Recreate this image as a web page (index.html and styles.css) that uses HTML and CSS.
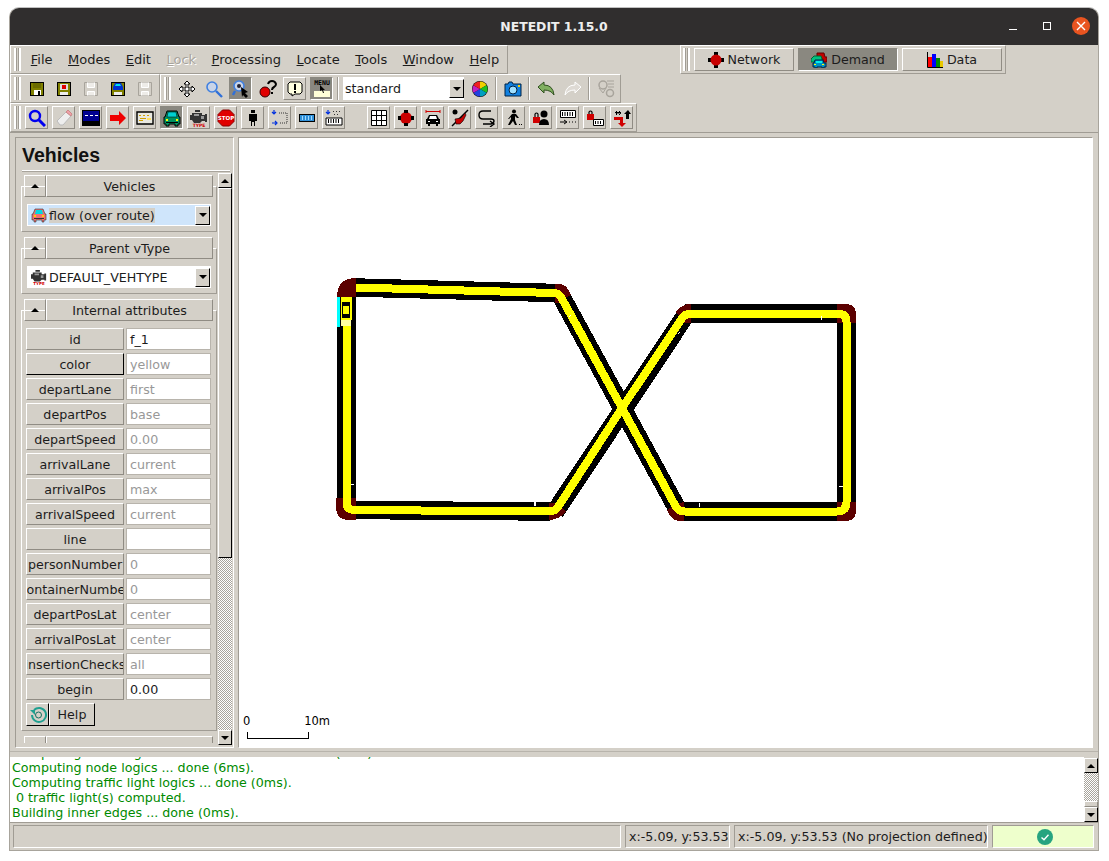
FILE: index.html
```html
<!DOCTYPE html>
<html>
<head>
    <title>NETEDIT 1.15.0</title>
    <link rel="stylesheet" href="styles.css">
</head>
<body>
    <!-- shared icons -->
    <svg class="defs" width="0" height="0">
        <symbol id="floppy" viewBox="0 0 16 16">
            <path d="M1 1h14v14H1z" fill="#000"/><path d="M2 2h12v12H2z" fill="#808000"/>
            <path d="M4 2h8v5H4z" fill="#6c6c00"/><path d="M5 9h7v5H5z" fill="#fff"/><path d="M9 10h2v4H9z" fill="#000"/>
        </symbol>
        <symbol id="floppy-off" viewBox="0 0 16 16">
            <path d="M1.5 1.5h13v13h-13z" fill="#d4d0c8" stroke="#a8a49c"/>
            <path d="M4.5 1.5v5h7v-5M4.5 14.5v-4h7v4" fill="#eeece8" stroke="#fff"/>
        </symbol>
        <symbol id="engine" viewBox="0 0 18 18">
            <path d="M5 1h5v2H5zM2 4h10v2h3v-1h2v8h-2v-1h-3l-2 2H4L2 11H0V6h2z" fill="#333"/>
            <path d="M4 5h5v2H4zM11 7h3v3h-3z" fill="#999"/>
            <text class="ico-type" x="9" y="17.5">TYPE</text>
        </symbol>
        <symbol id="sedan" viewBox="0 0 16 16">
            <path d="M4 2h8l2 5h1v6h-2v2h-2v-2H5v2H3v-2H1V7h1z" fill="currentColor" stroke="#333" stroke-width=".6"/>
            <path d="M5 3h6l1 4H4z" fill="#00d8e0"/>
            <path d="M3 8h2v2H3zM11 8h2v2h-2z" fill="#ffd000"/>
            <path d="M3 11h10v1H3z" fill="#333"/>
        </symbol>
    </svg>

    <div class="window">
        <div class="titlebar">
            <span class="title">NETEDIT 1.15.0</span>
            <div class="win-btns">
                <span class="win-min"></span>
                <span class="win-max"></span>
                <span class="win-close">
                    <svg width="10" height="10" viewBox="0 0 10 10"><path d="M1 1l8 8M9 1l-8 8" stroke="#fff" stroke-width="1.4"/></svg>
                </span>
            </div>
        </div>

        <div class="row">
            <div class="toolbar menubar">
                <span class="grip"></span>
                <a class="menu-item"><u>F</u>ile</a>
                <a class="menu-item"><u>M</u>odes</a>
                <a class="menu-item"><u>E</u>dit</a>
                <a class="menu-item disabled"><u>L</u>ock</a>
                <a class="menu-item"><u>P</u>rocessing</a>
                <a class="menu-item"><u>L</u>ocate</a>
                <a class="menu-item"><u>T</u>ools</a>
                <a class="menu-item"><u>W</u>indow</a>
                <a class="menu-item"><u>H</u>elp</a>
            </div>
            <div class="toolbar modes">
                <span class="grip"></span>
                <div class="mode-btn">
                    <svg width="16" height="16" viewBox="0 0 16 16"><path d="M6 0h4v16H6zM0 6h16v4H0z" fill="#000"/><circle cx="8" cy="8" r="5.5" fill="#c80000"/></svg>
                    Network
                </div>
                <div class="mode-btn active">
                    <svg width="16" height="16" viewBox="0 0 16 16">
                        <path d="M6 1h7l1 4h2v5h-4V7H6z" fill="#c00000" stroke="#600"/>
                        <path d="M1 6l2-2h7l1 3v3H0V7z" fill="#00c080" stroke="#063"/>
                        <path d="M4 8h8l1 3h2v4h-2v1h-2v-1H6v1H4v-1H2v-4h1z" fill="#0090c0" stroke="#024"/>
                        <path d="M5 9h6v2H5z" fill="#00f0f0"/><path d="M3 12h2v1H3zM11 12h2v1h-2z" fill="#ff0"/>
                    </svg>
                    Demand
                </div>
                <div class="mode-btn">
                    <svg width="16" height="16" viewBox="0 0 16 16"><path d="M1 5h4v10H1z" fill="#f00"/><path d="M5 2h4v13H5z" fill="#00f"/><path d="M9 6h4v9H9z" fill="#080"/><path d="M13 9h3v6h-3z" fill="#e8c800"/><path d="M.5 0v15.5H16" fill="none" stroke="#000"/></svg>
                    Data
                </div>
            </div>
        </div>

        <div class="row">
            <div class="toolbar">
                <span class="grip"></span>
                <span class="btn flat"><svg width="16" height="16"><use href="#floppy"/></svg></span>
                <span class="btn flat">
                    <svg width="16" height="16" viewBox="0 0 16 16"><path d="M1 1h14v14H1z" fill="#000"/><path d="M2 2h12v12H2z" fill="#808000"/><path d="M4 3h8v6H4z" fill="#ddd"/><path d="M6 4h4v4H6z" fill="#e00000"/><path d="M4 11h8v3H4z" fill="#eee"/></svg>
                </span>
                <span class="btn flat"><svg width="16" height="16"><use href="#floppy-off"/></svg></span>
                <span class="btn flat">
                    <svg width="16" height="16" viewBox="0 0 16 16"><path d="M1 1h14v14H1z" fill="#000"/><path d="M2 2h12v12H2z" fill="#808000"/><path d="M5 2h6l2 4v3H3V6z" fill="#0030d0"/><path d="M6 3h4l1 2H5z" fill="#00e0f0"/><path d="M4 11h8v3H4z" fill="#eee"/></svg>
                </span>
                <span class="btn flat"><svg width="16" height="16"><use href="#floppy-off"/></svg></span>
            </div>
            <div class="toolbar">
                <span class="grip"></span>
                <span class="btn flat">
                    <svg width="18" height="18" viewBox="0 0 18 18"><path d="M9 1l3 3h-2v4h4V6l3 3-3 3v-2h-4v4h2l-3 3-3-3h2v-4H4v2L1 9l3-3v2h4V4H6z" fill="#fff" stroke="#000"/></svg>
                </span>
                <span class="btn flat">
                    <svg width="18" height="18" viewBox="0 0 18 18"><circle cx="7" cy="7" r="5" fill="#c8d4e8" stroke="#4080e0" stroke-width="1.6"/><path d="M11 11l6 6" stroke="#3070d8" stroke-width="2.4"/></svg>
                </span>
                <span class="btn active">
                    <svg width="18" height="18" viewBox="0 0 18 18"><circle cx="7" cy="6" r="5" fill="#c8d4e8" stroke="#4080e0" stroke-width="1.6"/><circle cx="7" cy="6" r="2" fill="#223"/><path d="M3 11l-2 4" stroke="#3070d8" stroke-width="2.4"/><path d="M9 7l7 5-3 1 3 3-2 2-3-3-1 2z" fill="#000"/></svg>
                </span>
                <span class="btn flat">
                    <svg width="18" height="18" viewBox="0 0 18 18"><circle cx="6" cy="12" r="5" fill="#e00000" stroke="#300"/><path d="M9 4q1-3 4-3t4 3q0 2-2 3t-2 3" fill="none" stroke="#000" stroke-width="2"/><path d="M12 12h2v2h-2z" fill="#000"/></svg>
                </span>
                <span class="btn raised">
                    <svg width="16" height="16" viewBox="0 0 16 16"><path d="M3 1h10l2 2v8l-2 2H8l-3 2v-2H3l-2-2V3z" fill="#ffffe0" stroke="#000"/><path d="M7 3h2v6H7zM7 10h2v2H7z" fill="#000"/></svg>
                </span>
                <span class="btn active">
                    <svg width="20" height="20" viewBox="0 0 20 20"><text class="ico-menu" x="10" y="6">MENU</text><path d="M2 12h16v6H2z" fill="#ffffd8"/><path d="M8 6l5 5-2 0 1 3-1 0-1-3-2 1z" fill="#000"/></svg>
                </span>
                <span class="sep"></span>
                <div class="scheme">
                    <span class="scheme-text">standard</span>
                    <span class="drop"><span class="arrow-down"></span></span>
                </div>
                <span class="btn flat">
                    <svg width="18" height="18" viewBox="0 0 18 18">
                        <circle cx="9" cy="9" r="8" fill="#000"/>
                        <path d="M9 9V1.5A7.5 7.5 0 0 1 15.5 5.2z" fill="#f0d000"/><path d="M9 9l6.5-3.8a7.5 7.5 0 0 1 0 7.6z" fill="#20c020"/>
                        <path d="M9 9l6.5 3.8A7.5 7.5 0 0 1 9 16.5z" fill="#00a0c0"/><path d="M9 9v7.5a7.5 7.5 0 0 1-6.5-3.7z" fill="#2040e0"/>
                        <path d="M9 9l-6.5 3.8a7.5 7.5 0 0 1 0-7.6z" fill="#c020c0"/><path d="M9 9L2.5 5.2A7.5 7.5 0 0 1 9 1.5z" fill="#f02020"/>
                    </svg>
                </span>
                <span class="sep"></span>
                <span class="btn flat">
                    <svg width="18" height="18" viewBox="0 0 18 18"><path d="M1 4h3l1-2h3l1 2h8v12H1z" fill="#1080e0" stroke="#024"/><circle cx="9" cy="10" r="4" fill="#a0e0ff" stroke="#024"/><path d="M14 5h2v2h-2z" fill="#ffd000"/></svg>
                </span>
                <span class="sep"></span>
                <span class="btn flat">
                    <svg width="18" height="18" viewBox="0 0 18 18"><path d="M1 7l6-5v3q9 0 10 10-3-5-10-5v3z" fill="#80b060" stroke="#305020"/></svg>
                </span>
                <span class="btn flat">
                    <svg width="18" height="18" viewBox="0 0 18 18"><path d="M17 7l-6-5v3Q2 5 1 15q3-5 10-5v3z" fill="#dedad4" stroke="#fff"/></svg>
                </span>
                <span class="sep"></span>
                <span class="btn flat">
                    <svg width="18" height="18" viewBox="0 0 18 18"><circle cx="6" cy="5" r="4" fill="none" stroke="#a8a49c" stroke-width="1.5"/><path d="M2 8l4 5 3-5" fill="none" stroke="#a8a49c"/><path d="M10 1h7M11 4h6M11 7h6" stroke="#a8a49c"/><circle cx="13" cy="13" r="3.5" fill="none" stroke="#a8a49c" stroke-width="1.5"/></svg>
                </span>
            </div>
        </div>

        <div class="row">
            <div class="toolbar">
                <span class="grip"></span>
                <span class="btn raised">
                    <svg width="18" height="18" viewBox="0 0 18 18"><circle cx="7" cy="7" r="5" fill="none" stroke="#0000f0" stroke-width="2.4"/><path d="M11 11l6 6" stroke="#0000f0" stroke-width="3"/></svg>
                </span>
                <span class="btn raised">
                    <svg width="18" height="18" viewBox="0 0 18 18"><path d="M2 12l9-9 5 4-8 9H5z" fill="#eee" stroke="#bbb"/><path d="M11 3l2-2 4 4-1 2z" fill="#f0a0a8" stroke="#c88"/></svg>
                </span>
                <span class="btn raised">
                    <svg width="18" height="18" viewBox="0 0 18 18"><path d="M0 1h18v16H0z" fill="#000"/><path d="M1 2h16v10H1z" fill="#000090"/><path d="M3 6h3v1H3zM8 6h3v1H8zM13 6h3v1h-3z" fill="#fff"/></svg>
                </span>
                <span class="btn raised">
                    <svg width="18" height="18" viewBox="0 0 18 18"><path d="M1 6h9V2l7 7-7 7v-4H1z" fill="#f00000"/></svg>
                </span>
                <span class="btn raised">
                    <svg width="18" height="18" viewBox="0 0 18 18"><path d="M1 3h16v12H1z" fill="#e8e8e0" stroke="#000" stroke-width="1.4"/><path d="M3 6h2v1H3zM7 6h2v1H7zM11 6h2v1h-2zM4 9h6v1H4zM3 11h4v1H3z" fill="#d0a000"/><path d="M11 9h4v2h-4z" fill="#ffe060"/></svg>
                </span>
                <span class="btn active">
                    <svg width="18" height="18" viewBox="0 0 18 18"><path d="M4 2h10l2 6h1v7h-2v2h-3v-2H6v2H3v-2H1V8h1z" fill="#009060" stroke="#000"/><path d="M5 3h8l1 5H4z" fill="#00d0d0" stroke="#000" stroke-width=".5"/><path d="M3 10h2v2H3zM13 10h2v2h-2z" fill="#ff0"/><path d="M3 13h12v1H3z" fill="#000"/></svg>
                </span>
                <span class="btn raised"><svg width="18" height="18"><use href="#engine"/></svg></span>
                <span class="btn raised">
                    <svg width="18" height="18" viewBox="0 0 18 18"><path d="M5.5 1h7L17 5.500v7L12.500 17h-7L1 12.500v-7z" fill="#e00000" stroke="#800"/><text class="ico-stop" x="9" y="11">STOP</text></svg>
                </span>
                <span class="btn raised">
                    <svg width="18" height="18" viewBox="0 0 18 18"><path d="M7 1h4v3H7zM5 5h8v7h-2v5H10v-4H8v4H7v-5H5z" fill="#000"/></svg>
                </span>
                <span class="btn raised">
                    <svg width="18" height="18" viewBox="0 0 18 18"><path d="M3 1v3M1 3l2 2 2-2M1 14h4M4 12l2 2-2 2" fill="none" stroke="#0030e0" stroke-width="1.2"/><path d="M8 4h8v10H8" fill="none" stroke="#333" stroke-dasharray="1 1"/></svg>
                </span>
                <span class="btn raised">
                    <svg width="18" height="18" viewBox="0 0 18 18"><path d="M1 5h16v8H1z" fill="#000"/><path d="M2 6h14v6H2z" fill="#3090d8"/><path d="M4 7h1v4H4zM7 7h1v4H7zM10 7h1v4h-1zM13 7h1v4h-1z" fill="#a0d8ff"/></svg>
                </span>
                <span class="btn raised">
                    <svg width="18" height="18" viewBox="0 0 18 18"><path d="M3 1v3M1 3l2 2 2-2" fill="none" stroke="#0030e0" stroke-width="1.2"/><path d="M8 2h1v1H8zM11 2h1v1h-1zM14 2h1v1h-1zM9 5h1v1H9zM12 5h1v1h-1z" fill="#333"/><path d="M1 9h16v7H1z" fill="#fff" stroke="#000"/><path d="M3 10h1v4H3zM5.500 10h1v4h-1zM8 10h1v4H8zM10.500 10h1v4h-1zM13 10h1v4h-1z" fill="#000"/></svg>
                </span>
                <span class="btn-gap"></span>
                <span class="btn raised">
                    <svg width="18" height="18" viewBox="0 0 18 18"><path d="M1.500 1.500h15v15h-15zM6.500 1.500v15M11.500 1.500v15M1.500 6.500h15M1.500 11.500h15" fill="#fff" stroke="#000"/></svg>
                </span>
                <span class="btn raised">
                    <svg width="18" height="18" viewBox="0 0 18 18"><path d="M7 1h4v16H7zM1 7h16v4H1z" fill="#000"/><circle cx="9" cy="9" r="6" fill="#c80000"/><path d="M7 1h4v3H7zM7 14h4v3H7zM1 7h3v4H1zM14 7h3v4h-3z" fill="#000"/></svg>
                </span>
                <span class="btn raised">
                    <svg width="18" height="18" viewBox="0 0 18 18"><path d="M2 2.500h14M2 1v3M16 1v3" stroke="#d00000"/><path d="M5 6h8l2 4h1v5h-2v2h-2v-2H6v2H4v-2H2v-5h1z" fill="#000"/><path d="M6 7h6l1 3H5z" fill="#fff"/><path d="M4 12h2v1H4zM12 12h2v1h-2z" fill="#fff"/></svg>
                </span>
                <span class="btn raised">
                    <svg width="18" height="18" viewBox="0 0 18 18"><circle cx="4" cy="3" r="2.500" fill="#000"/><path d="M17 1L1 17" stroke="#000" stroke-width="1.4"/><path d="M4 10l6-1 4-5 1 2-3 6-3 3H5z" fill="#c80000" stroke="#000" stroke-width=".6"/></svg>
                </span>
                <span class="btn raised">
                    <svg width="18" height="18" viewBox="0 0 18 18"><path d="M13 2H5Q1 2 1 6t4 4h8q3 0 3 2t-3 3H5" fill="none" stroke="#000" stroke-width="1.400"/><path d="M12 12l4 3-4 3" fill="none" stroke="#000" stroke-width="1.400"/></svg>
                </span>
                <span class="btn raised">
                    <svg width="18" height="18" viewBox="0 0 18 18"><circle cx="9" cy="2.500" r="2" fill="#000"/><path d="M7 5h4l3 4h-2l-2-2v4l2 5h-2l-2-4-3 4H3l3-6V8L4 10H3z" fill="#000"/><path d="M14 15h1v1h-1zM16 15h1v1h-1z" fill="#000"/></svg>
                </span>
                <span class="btn raised">
                    <svg width="18" height="18" viewBox="0 0 18 18"><path d="M1 8h7v6H1z" fill="#d00000"/><path d="M3 8V5q1.500-2 3 0v3" fill="none" stroke="#000" stroke-width="1.200"/><circle cx="12" cy="5" r="3.500" fill="#000"/><path d="M7 16q0-6 5-6t5 6z" fill="#000"/></svg>
                </span>
                <span class="btn raised">
                    <svg width="18" height="18" viewBox="0 0 18 18"><path d="M1.500 1.500h15v7h-15z" fill="#fff" stroke="#000"/><path d="M3 3h1v4H3zM5.500 3h1v4h-1zM8 3h1v4H8zM10.500 3h1v4h-1zM13 3h1v4h-1z" fill="#000"/><path d="M1 13h6M5 11l3 2-3 2" fill="none" stroke="#000"/><path d="M10 13h1M13 13h1M16 13h1" stroke="#000"/></svg>
                </span>
                <span class="btn raised">
                    <svg width="18" height="18" viewBox="0 0 18 18"><path d="M1 5h7v6H1z" fill="#d00000"/><path d="M3 5V3q1.500-2 3 0v2" fill="none" stroke="#000" stroke-width="1.200"/><path d="M7.500 10.500h10v6h-10z" fill="#fff" stroke="#000"/><path d="M9 12h1v3H9zM11.500 12h1v3h-1zM14 12h1v3h-1z" fill="#000"/></svg>
                </span>
                <span class="btn raised">
                    <svg width="18" height="18" viewBox="0 0 18 18"><path d="M1 8h9v3H1z" fill="#d00000"/><path d="M7 10h3v4h3l-4 4-4-4h2z" fill="#d00000"/><path d="M13 10V5h-2l4-4 3 4h-2v5z" fill="#000"/><path d="M3 2h1v4H3zM6 2h1v4H6zM2 3h6v1H2zM2 5h6v-1" fill="#000"/></svg>
                </span>
            </div>
        </div>

        <div class="main">
            <div class="side">
                <h1 class="side-title">Vehicles</h1>
                <div class="side-body">
                    <div class="side-scroll">
                        <div class="group">
                            <div class="group-head">
                                <span class="collapse"><span class="arrow-up"></span></span>
                                <span class="group-name">Vehicles</span>
                            </div>
                            <div class="group-frame">
                                <div class="combo selected">
                                    <svg class="combo-ico" width="16" height="16" color="#f07070"><use href="#sedan"/></svg>
                                    <span class="combo-sel">flow (over route)</span>
                                    <span class="drop"><span class="arrow-down"></span></span>
                                </div>
                            </div>
                        </div>
                        <div class="group">
                            <div class="group-head">
                                <span class="collapse"><span class="arrow-up"></span></span>
                                <span class="group-name">Parent vType</span>
                            </div>
                            <div class="group-frame">
                                <div class="combo">
                                    <svg class="combo-ico" width="16" height="16"><use href="#engine"/></svg>
                                    <span class="combo-sel">DEFAULT_VEHTYPE</span>
                                    <span class="drop"><span class="arrow-down"></span></span>
                                </div>
                            </div>
                        </div>
                        <div class="group">
                            <div class="group-head">
                                <span class="collapse"><span class="arrow-up"></span></span>
                                <span class="group-name">Internal attributes</span>
                            </div>
                            <div class="group-frame attrs">
                                <div class="attr"><span class="attr-name">id</span><span class="attr-value">f_1</span></div>
                                <div class="attr"><span class="attr-name push">color</span><span class="attr-value muted">yellow</span></div>
                                <div class="attr"><span class="attr-name">departLane</span><span class="attr-value muted">first</span></div>
                                <div class="attr"><span class="attr-name">departPos</span><span class="attr-value muted">base</span></div>
                                <div class="attr"><span class="attr-name">departSpeed</span><span class="attr-value muted">0.00</span></div>
                                <div class="attr"><span class="attr-name">arrivalLane</span><span class="attr-value muted">current</span></div>
                                <div class="attr"><span class="attr-name">arrivalPos</span><span class="attr-value muted">max</span></div>
                                <div class="attr"><span class="attr-name">arrivalSpeed</span><span class="attr-value muted">current</span></div>
                                <div class="attr"><span class="attr-name">line</span><span class="attr-value"></span></div>
                                <div class="attr"><span class="attr-name">personNumber</span><span class="attr-value muted">0</span></div>
                                <div class="attr"><span class="attr-name">containerNumber</span><span class="attr-value muted">0</span></div>
                                <div class="attr"><span class="attr-name">departPosLat</span><span class="attr-value muted">center</span></div>
                                <div class="attr"><span class="attr-name">arrivalPosLat</span><span class="attr-value muted">center</span></div>
                                <div class="attr"><span class="attr-name">insertionChecks</span><span class="attr-value muted">all</span></div>
                                <div class="attr"><span class="attr-name">begin</span><span class="attr-value">0.00</span></div>
                                <div class="help-row">
                                    <span class="help-ico">
                                        <svg width="18" height="18" viewBox="0 0 18 18"><path d="M5 4a7 7 0 1 1-2 5" fill="none" stroke="#20a090" stroke-width="2"/><path d="M1 4h5v5z" fill="#20a090"/><circle cx="9.500" cy="9" r="3" fill="none" stroke="#107060"/></svg>
                                    </span>
                                    <span class="help-btn">Help</span>
                                </div>
                            </div>
                        </div>
                        <div class="group">
                            <div class="group-head">
                                <span class="collapse"><span class="arrow-up"></span></span>
                                <span class="group-name">Flow attributes</span>
                            </div>
                        </div>
                    </div>
                    <div class="vscroll">
                        <span class="scroll-btn"><span class="arrow-up"></span></span>
                        <span class="scroll-thumb"></span>
                        <span class="scroll-track"></span>
                        <span class="scroll-btn"><span class="arrow-down"></span></span>
                    </div>
                </div>
            </div>

            <div class="canvas">
                <svg class="net" width="853" height="609" viewBox="240 138 853 609">
                    <!-- road edges -->
                    <g class="road-edge">
                        <path d="M347.500 297V500"/>
                        <path d="M357 287.500L556 293"/>
                        <path d="M357 510L551 511.500"/>
                        <path d="M562 296L680 512"/>
                        <path d="M556 512L688 313"/>
                        <path d="M686 313.500H838"/>
                        <path d="M847.500 323V502"/>
                        <path d="M684 511.500H838"/>
                    </g>
                    <!-- junctions -->
                    <g class="junction">
                        <path d="M338 297Q338 278 357 278V297Z"/>
                        <path d="M556 284H562Q568 285 572 295L563 300L560 303H556Z"/>
                        <path d="M337 498H357V520H350Q338 520 337 508Z"/>
                        <path d="M550 503H556L567 511Q560 520 550 520Z"/>
                        <path d="M677 312Q682 304 692 304V323H685Z"/>
                        <path d="M838 304H846Q857 304 857 315V323H838Z"/>
                        <path d="M838 502H857V510Q857 521 846 521H838Z"/>
                        <path d="M684 502H685V521H680Q673 521 668 510L676 505Z"/>
                    </g>
                    <path class="road-lane" d="M347.500 297V504Q347.500 510 357 510L550 511.500Q556 511.500 559 507L623 408L684 317Q687 313.500 692 313.500H838Q847.500 313.500 847.500 322V502Q847.500 511.500 838 511.500H686Q680 511.500 677 507L623 408L562 297Q559 293 555 293L357 287.500"/>
                    <!-- small marks where the lanes meet -->
                    <path class="tick" d="M352 484h3M535 502v4M536 506v-4M822 316v4M840 486h4M700 503v4M681 332l-2 2M572 315l-2 2"/>
                    <!-- vehicle -->
                    <path d="M338 297h3v30h-3z" fill="#00ffff"/>
                    <path d="M342 297h11v23h-11z" fill="#ffff00"/>
                    <path d="M342 320h10v6h-10z" fill="#ffffa0"/>
                    <path d="M343 302h8v4h-8zM343 314h8v4h-8zM343 306h1v8h-1zM350 306h1v8h-1z" fill="#000"/>
                </svg>
                <div class="scale">
                    <div class="scale-labels"><span>0</span><span>10m</span></div>
                    <div class="scale-bar"></div>
                </div>
            </div>
        </div>

        <div class="log">
            <div class="log-text">
                <div>Computing traffic light control information ... done (0ms).</div>
                <div>Computing node logics ... done (6ms).</div>
                <div>Computing traffic light logics ... done (0ms).</div>
                <div>&nbsp;0 traffic light(s) computed.</div>
                <div>Building inner edges ... done (0ms).</div>
            </div>
            <div class="vscroll log-scroll">
                <span class="scroll-btn"><span class="arrow-up"></span></span>
                <span class="scroll-track"></span>
                <span class="scroll-thumb mini"></span>
                <span class="scroll-btn"><span class="arrow-down"></span></span>
            </div>
        </div>

        <div class="status">
            <span class="cell grow"></span>
            <span class="cell coord1">x:-5.09, y:53.53</span>
            <span class="cell coord2">x:-5.09, y:53.53 (No projection defined)</span>
            <span class="cell ok">
                <svg width="16" height="16" viewBox="0 0 16 16"><circle cx="8" cy="8" r="8" fill="#26a480"/><path d="M4.500 8.500l2.500 2.300 4.500-5" fill="none" stroke="#fff" stroke-width="1.400"/></svg>
            </span>
        </div>
    </div>
</body>
</html>
```

FILE: styles.css
```css
* {
    box-sizing: border-box;
}
body {
    margin: 0;
    background-color: #fff;
    font-family: "DejaVu Sans", sans-serif;
    font-size: 12.67px;
    color: #1c1c1c;
}
.defs {
    position: absolute;
}
.window {
    width: 1090px;
    height: 844px;
    margin: 7px 0 0 9px;
    background-color: #d4d0c8;
    border: 1px solid #a8a49c;
    border-top-color: #c0c0c0;
    border-radius: 10px 10px 0 0;
    display: flex;
    flex-direction: column;
    overflow: hidden;
}

/* title bar */
.titlebar {
    height: 37px;
    flex: none;
    background-color: #302e2e;
    color: #eeeeee;
    display: flex;
    align-items: center;
    justify-content: center;
    position: relative;
}
.title {
    font-size: 12.4px;
    font-weight: bold;
}
.win-btns {
    position: absolute;
    right: 8px;
    top: 9px;
    display: flex;
    align-items: center;
    height: 18px;
}
.win-min {
    width: 8px;
    height: 1px;
    margin-top: 6px;
    background-color: #fff;
    margin-right: 26px;
}
.win-max {
    width: 8px;
    height: 8px;
    border: 1px solid #fff;
    margin-right: 21px;
}
.win-close {
    width: 18px;
    height: 18px;
    border-radius: 50%;
    background-color: #e95420;
    display: flex;
    align-items: center;
    justify-content: center;
}

/* tool bars */
.row {
    height: 29px;
    flex: none;
    display: flex;
}
.toolbar {
    display: flex;
    align-items: center;
    gap: 4px;
    height: 29px;
    padding-left: 3px;
    padding-right: 3px;
    border: 1px solid;
    border-color: #fff #a09c94 #a09c94 #fff;
}
.grip {
    width: 7px;
    height: 23px;
    flex: none;
    border-left: 2px solid #fff;
    border-right: 2px solid #fff;
    box-shadow: inset 1px 0 0 #a09c94, inset -1px 0 0 #a09c94;
}
.menubar {
    width: 498px;
    gap: 0;
}
.menubar .grip {
    margin-right: 2px;
}
.menu-item {
    padding: 0 7.75px;
    font-size: 13px;
    white-space: nowrap;
}
.menu-item.disabled {
    color: #a8a49c;
    text-shadow: 1px 1px 0 #fff;
}
.modes {
    margin-left: 172px;
    width: 326px;
    padding-left: 2px;
}
.mode-btn {
    width: 100px;
    height: 23px;
    display: flex;
    align-items: center;
    justify-content: center;
    gap: 4px;
    border: 1px solid;
    border-color: #fff #908c84 #908c84 #fff;
}
.mode-btn.active {
    background-color: #8a8880;
    border-color: #8a8880 #fff #fff #8a8880;
}
.btn {
    width: 23px;
    height: 23px;
    flex: none;
    display: flex;
    align-items: center;
    justify-content: center;
    border: 1px solid transparent;
}
.btn.raised {
    border-color: #fff #908c84 #908c84 #fff;
}
.btn.active {
    background-color: #8a8880;
    border-color: #8a8880 #fff #fff #8a8880;
}
.btn-gap {
    width: 14px;
    flex: none;
}
.sep {
    width: 2px;
    height: 23px;
    flex: none;
    border-left: 1px solid #a09c94;
    border-right: 1px solid #fff;
}
.scheme {
    width: 121px;
    height: 23px;
    flex: none;
    background-color: #fff;
    display: flex;
    align-items: center;
    padding-left: 2px;
}
.scheme-text {
    flex: 1;
}
.drop {
    width: 15px;
    height: 19px;
    flex: none;
    background-color: #d4d0c8;
    border: 1px solid;
    border-color: #fff #000 #000 #fff;
    display: flex;
    align-items: center;
    justify-content: center;
}
.arrow-down,
.arrow-up {
    width: 0;
    height: 0;
    border-left: 4px solid transparent;
    border-right: 4px solid transparent;
}
.arrow-down {
    border-top: 4px solid #000;
}
.arrow-up {
    border-bottom: 4px solid #000;
}

/* main area */
.main {
    height: 620px;
    flex: none;
    display: flex;
    padding: 4px 4px 2px 5px;
    border-top: 1px solid #a09c94;
    border-bottom: 1px solid #b8b4ac;
}
.side {
    width: 219px;
    height: 611px;
    flex: none;
    display: flex;
    flex-direction: column;
    border: 1px solid;
    border-color: #a09c94 #fff #fff #a09c94;
    overflow: hidden;
}
.side-title {
    margin: 0 3px 0 6px;
    height: 33px;
    flex: none;
    font-family: "Liberation Sans", sans-serif;
    font-size: 19.5px;
    line-height: 35px;
    font-weight: bold;
    color: #111;
    border-bottom: 1px solid #fff;
    box-shadow: 0 1px 0 #a8a49c;
}
.side-body {
    flex: 1;
    min-height: 0;
    display: flex;
    padding: 2px 2px 2px 4px;
}
.side-scroll {
    width: 197px;
    flex: none;
    overflow: hidden;
    padding-top: 2px;
    margin-bottom: 2px;
    display: flex;
    flex-direction: column;
    gap: 5px;
}
.group {
    flex: none;
}
.group-head {
    display: flex;
    margin: 0 4px;
    position: relative;
}
.collapse {
    width: 22px;
    height: 22px;
    flex: none;
    display: flex;
    align-items: center;
    justify-content: center;
    border: 1px solid;
    border-color: #fff #908c84 #908c84 #fff;
}
.group-name {
    flex: 1;
    height: 22px;
    display: flex;
    align-items: center;
    justify-content: center;
    background-color: #d4d0c8;
    border: 1px solid;
    border-color: #fff #908c84 #908c84 #fff;
}
.group-frame {
    margin: -11px 0 0 1px;
    padding: 17px 5px 5px;
    border: 1px solid;
    border-color: #fff #a09c94 #a09c94 #fff;
}
.combo {
    height: 22px;
    display: flex;
    align-items: center;
    background-color: #fff;
    padding-left: 3px;
    border: 1px solid #fff;
}
.combo.selected {
    background-color: #cfe5fb;
}
.combo-ico {
    flex: none;
    margin-right: 2px;
}
.combo-sel {
    flex: 1;
    white-space: nowrap;
}
.combo.selected .combo-sel {
    flex: none;
    margin-right: auto;
    background-color: #d4d0c8;
}
.attrs {
    display: flex;
    flex-direction: column;
    gap: 3px;
    padding-left: 4px;
    padding-bottom: 4px;
}
.attr {
    display: flex;
    gap: 2px;
    height: 22px;
}
.attr-name {
    width: 98px;
    flex: none;
    display: flex;
    align-items: center;
    justify-content: center;
    overflow: hidden;
    white-space: nowrap;
    border: 1px solid;
    border-color: #fff #908c84 #908c84 #fff;
}
.attr-name.push {
    border-color: #fff #000 #000 #fff;
}
.attr-value {
    width: 85px;
    flex: none;
    display: flex;
    align-items: center;
    padding-left: 3px;
    background-color: #fff;
    border: 1px solid #b8b4ac;
}
.muted {
    color: #989898;
}
.help-row {
    display: flex;
    height: 23px;
}
.help-ico {
    width: 23px;
    display: flex;
    align-items: center;
    justify-content: center;
    border: 1px solid;
    border-color: #fff #000 #000 #fff;
}
.help-btn {
    width: 46px;
    display: flex;
    align-items: center;
    justify-content: center;
    border: 1px solid;
    border-color: #fff #000 #000 #fff;
}
.vscroll {
    width: 14px;
    margin-left: 1px;
    flex: none;
    display: flex;
    flex-direction: column;
}
.scroll-btn {
    height: 15px;
    flex: none;
    display: flex;
    align-items: center;
    justify-content: center;
    background-color: #d4d0c8;
    border: 1px solid;
    border-color: #fff #000 #000 #fff;
}
.scroll-thumb {
    height: 370px;
    flex: none;
    background-color: #d4d0c8;
    border: 1px solid;
    border-color: #fff #000 #000 #fff;
}
.scroll-thumb.mini {
    height: 6px;
    border-color: #fff #908c84 #908c84 #fff;
}
.scroll-track {
    flex: 1;
    background-color: #d4d0c8;
    background-image: repeating-conic-gradient(#fff 0 25%, #a8a49c 0 50%);
    background-size: 2px 2px;
}
.canvas {
    width: 855px;
    height: 611px;
    margin-left: 4px;
    flex: none;
    position: relative;
    background-color: #fff;
    border: 1px solid;
    border-color: #a09c94 #fff #fff #a09c94;
}
.net {
    display: block;
    shape-rendering: crispEdges;
}
.road-edge path {
    fill: none;
    stroke: #000;
    stroke-width: 18.5;
}
.junction path {
    fill: #5c0000;
}
.road-lane {
    fill: none;
    stroke: #ffff00;
    stroke-width: 8;
}
.tick {
    fill: none;
    stroke: #fff;
}
.scale {
    position: absolute;
    left: 4px;
    top: 577px;
    width: 87px;
    font-size: 11.5px;
    line-height: 13px;
    color: #000;
}
.scale-labels {
    display: flex;
    justify-content: space-between;
}
.scale-bar {
    width: 62px;
    height: 7px;
    margin: 4px 0 0 4px;
    border: 1px solid #000;
    border-top: 0;
}
.ico-type {
    font-family: "DejaVu Sans", sans-serif;
    font-size: 4.5px;
    font-weight: bold;
    fill: #d00000;
    text-anchor: middle;
}
.ico-menu {
    font-family: "DejaVu Sans Mono", monospace;
    font-size: 6.5px;
    font-weight: bold;
    fill: #000;
    text-anchor: middle;
}
.ico-stop {
    font-family: "DejaVu Sans", sans-serif;
    font-size: 5.5px;
    font-weight: bold;
    fill: #fff;
    text-anchor: middle;
}

/* messages and status */
.log {
    height: 65px;
    margin-top: 5px;
    flex: none;
    display: flex;
    background-color: #fff;
}
.log-text {
    flex: 1;
    min-width: 0;
    padding-left: 2px;
    padding-bottom: 2px;
    color: #008a00;
    line-height: 15px;
    overflow: hidden;
    display: flex;
    flex-direction: column;
    justify-content: flex-end;
    white-space: nowrap;
}
.log-scroll {
    background-color: #d4d0c8;
    padding-top: 1px;
}
.status {
    flex: 1;
    display: flex;
    gap: 4px;
    padding: 2px 3px 1px;
    border-top: 1px solid #a09c94;
}
.cell {
    height: 23px;
    display: flex;
    align-items: center;
    padding-left: 3px;
    white-space: nowrap;
    overflow: hidden;
    border: 1px solid;
    border-color: #a09c94 #fff #fff #a09c94;
}
.grow {
    width: 608px;
}
.coord1 {
    width: 105px;
}
.coord2 {
    width: 254px;
}
.ok {
    width: 102px;
    justify-content: center;
    background-color: #eeffcc;
}
```
